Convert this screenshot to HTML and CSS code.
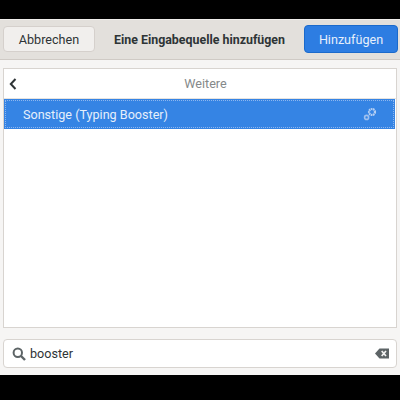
FILE: index.html
```html
<!DOCTYPE html>
<html lang="de">

<head>
    <meta charset="UTF-8">
    <title>Eine Eingabequelle hinzufügen</title>
    <link rel="stylesheet" href="styles.css">
</head>

<body>
    <div class="dialog">
        <div class="header">
            <button class="btn">Abbrechen</button>
            <div class="title">Eine Eingabequelle hinzufügen</div>
            <button class="btn btn-primary">Hinzufügen</button>
        </div>
        <div class="content">
            <div class="list">
                <div class="back-row">
                    <svg class="back-icon" width="8" height="12" viewBox="0 0 8 12">
                        <path d="M6.5 1 L1.8 6 L6.5 11" fill="none" stroke="#2e3436" stroke-width="2" />
                    </svg>
                    <span class="back-label">Weitere</span>
                </div>
                <div class="selected-row">
                    <span class="selected-label">Sonstige (Typing Booster)</span>
                    <svg width="14" height="14" viewBox="0 0 14 14">
                        <circle cx="9" cy="5" r="3" fill="none" stroke="#b5cff3" stroke-width="2.2" stroke-dasharray="1.6 0.5" />
                        <circle cx="3.6" cy="10.4" r="2" fill="none" stroke="#9fc0ef" stroke-width="1.6" />
                    </svg>
                </div>
            </div>
            <div class="search">
                <svg width="14" height="14" viewBox="0 0 14 14">
                    <circle cx="5.8" cy="5.8" r="4.2" fill="none" stroke="#5d6466" stroke-width="2" />
                    <path d="M9 9 L13 13" stroke="#5d6466" stroke-width="2.4" />
                </svg>
                <span class="search-text">booster</span>
                <svg class="clear-icon" width="14" height="11" viewBox="0 0 14 11">
                    <path d="M4.5 0.5 H14 V10.5 H4.5 L0 5.5 Z" fill="#5d6466" />
                    <path d="M6.7 3 L11 8 M11 3 L6.7 8" stroke="#f4f4f3" stroke-width="1.7" />
                </svg>
            </div>
        </div>
    </div>
</body>

</html>
```

FILE: styles.css
```css
html,
body {
    height: 100%;
}

body {
    margin: 0;
    background-color: #000000;
    font-family: 'Roboto', sans-serif;
    font-size: 12.6px;
    color: #2e3436;
    overflow: hidden;
}

.dialog {
    margin-top: 19px;
    height: 356px;
    display: flex;
    flex-direction: column;
    background-color: #f6f5f4;
}

.header {
    height: 41px;
    box-sizing: border-box;
    padding: 5px 2px 6px 3px;
    display: flex;
    align-items: stretch;
    justify-content: space-between;
    background-color: #e3e0dc;
    border-top: 1px solid #efedeb;
    border-bottom: 1px solid #cfcac5;
}

.btn {
    width: 92px;
    margin: 1px 0;
    padding: 0;
    border: 1px solid #d5d0cc;
    border-radius: 4px;
    background-color: #f1efed;
    font-family: inherit;
    font-size: 12.6px;
    color: #2e3436;
}

.btn-primary {
    width: 94px;
    margin: 0;
    border-color: #1b6acb;
    background-color: #2d7de2;
    color: #e6effb;
}

.title {
    align-self: center;
    font-weight: 700;
    font-size: 12.4px;
}

.content {
    flex: 1;
    padding: 8px 3px 7px;
    display: flex;
    flex-direction: column;
    gap: 11px;
}

.list {
    flex: 1;
    background-color: #ffffff;
    border: 1px solid #d8d4d0;
}

.back-row {
    position: relative;
    height: 29px;
    display: flex;
    align-items: center;
    justify-content: center;
    border-bottom: 1px solid #e6e3e0;
}

.back-icon {
    position: absolute;
    left: 5px;
    top: 9px;
}

.back-label {
    padding-left: 11px;
    color: #85898a;
}

.selected-row {
    height: 30px;
    box-sizing: border-box;
    margin-right: 1px;
    padding: 0 18px 0 19px;
    display: flex;
    align-items: center;
    justify-content: space-between;
    background-color: #3584e4;
    outline: 1px dotted #8db6ee;
    outline-offset: -2px;
    color: #e6effb;
}

.search {
    height: 29px;
    box-sizing: border-box;
    padding: 0 7px 0 8px;
    display: flex;
    align-items: center;
    gap: 4px;
    background-color: #ffffff;
    border: 1px solid #d8d4d0;
    border-radius: 4px;
}

.search-text {
    flex: 1;
    padding-bottom: 1px;
}
```
